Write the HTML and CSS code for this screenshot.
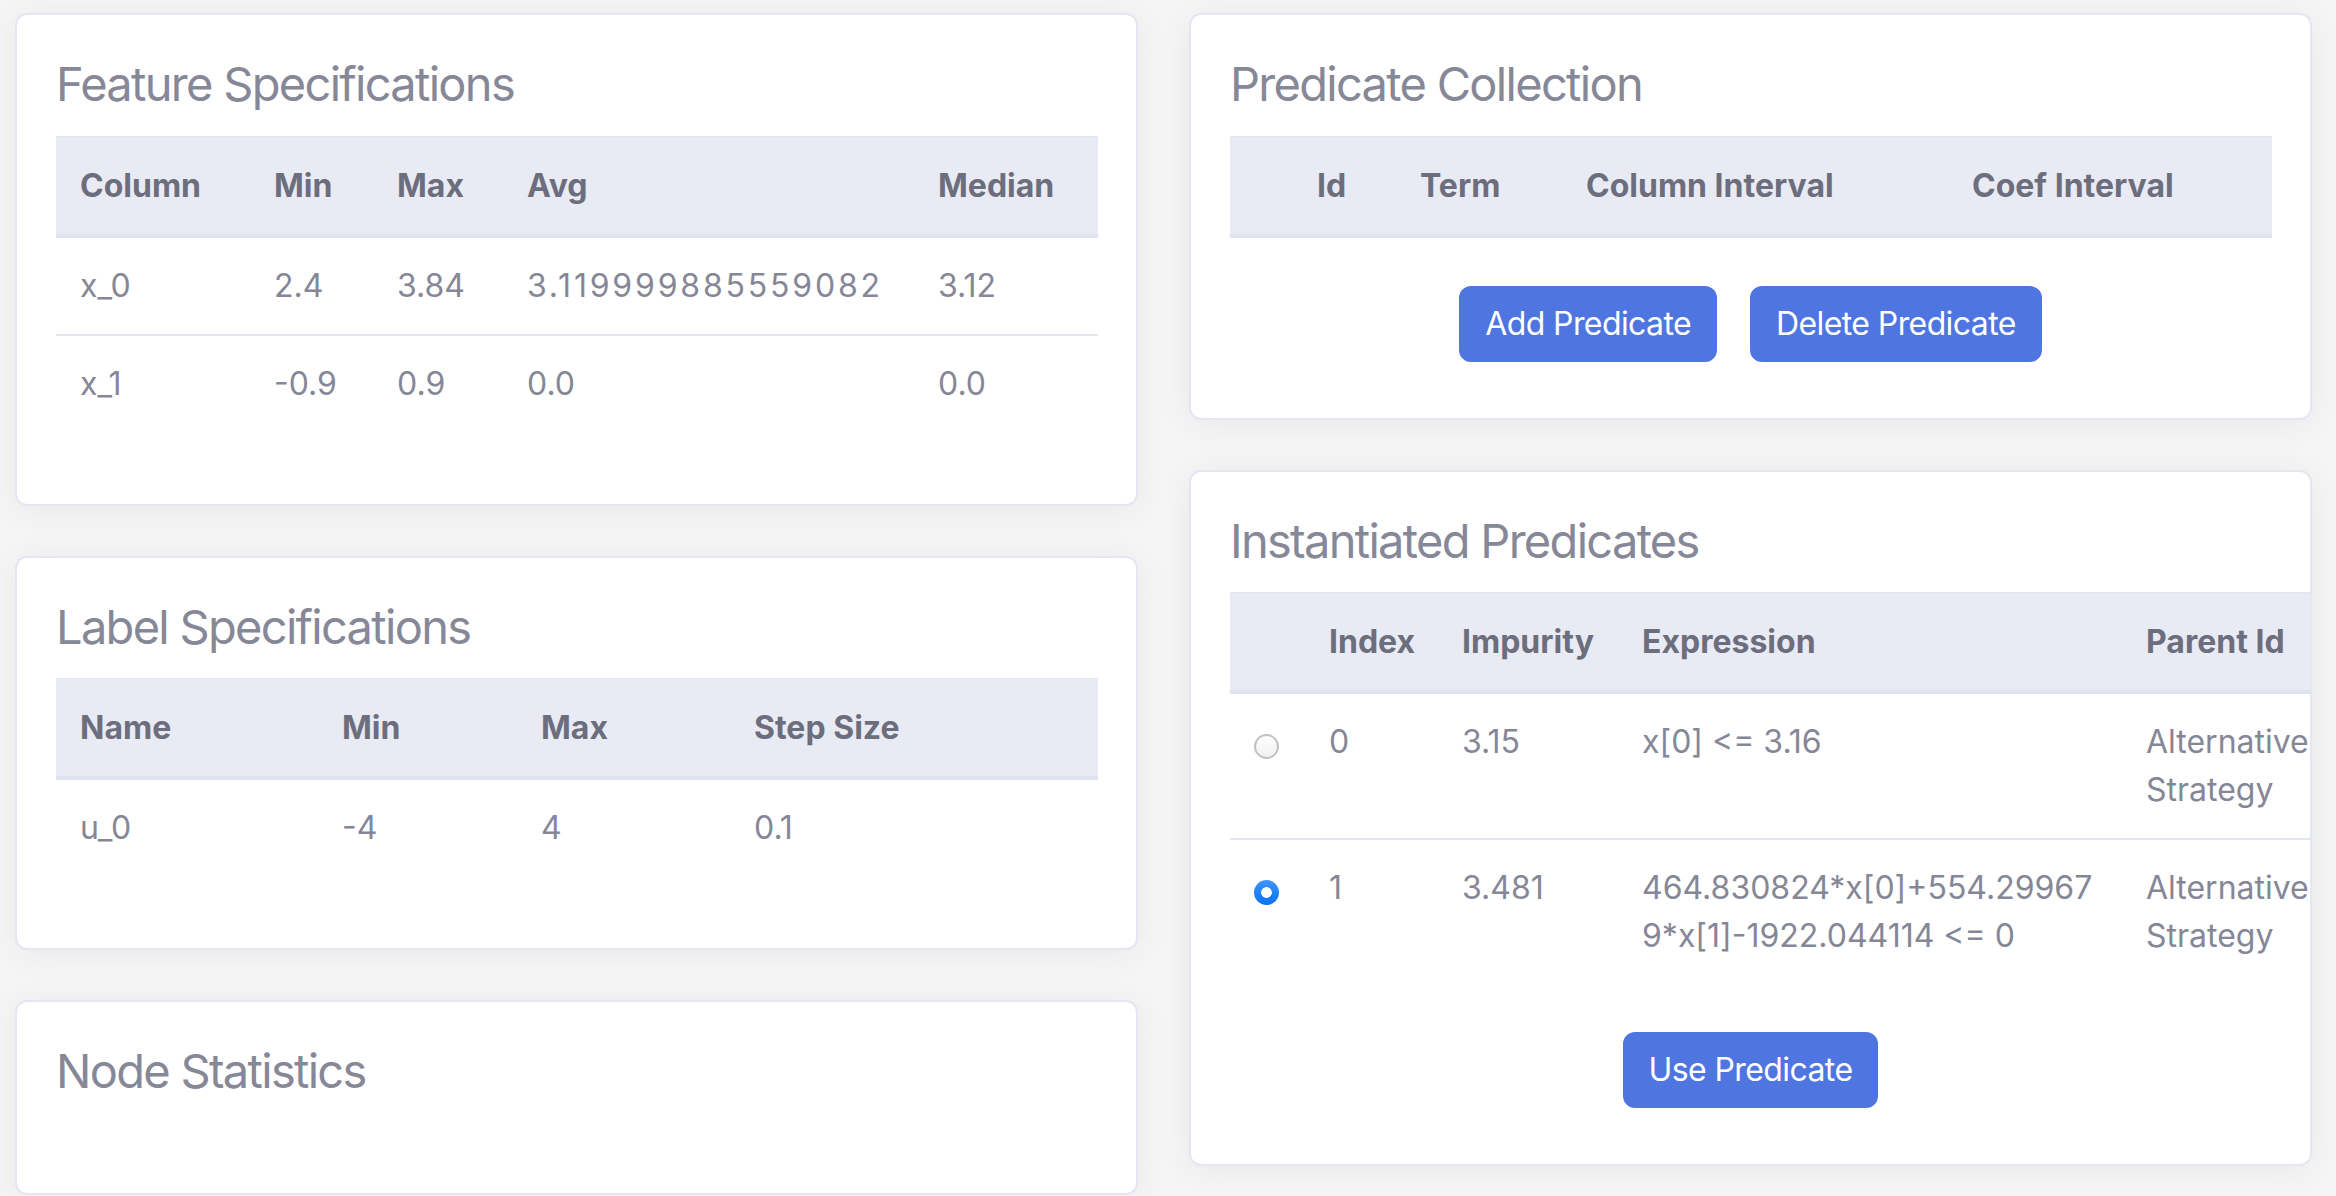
FILE: index.html
```html
<!DOCTYPE html>
<html lang="en">
<head>
<meta charset="utf-8">
<title>Node Inspector</title>
<link rel="stylesheet" href="styles.css">
</head>
<body>
<div class="layout">
  <div class="column">
    <section class="card">
      <h4 class="card-title">Feature Specifications</h4>
      <table class="table">
        <thead>
          <tr>
            <th class="fs-col">Column</th>
            <th class="fs-min">Min</th>
            <th class="fs-max">Max</th>
            <th class="fs-avg">Avg</th>
            <th class="fs-med">Median</th>
          </tr>
        </thead>
        <tbody>
          <tr><td>x_0</td><td>2.4</td><td>3.84</td><td class="num-wide">3.119999885559082</td><td>3.12</td></tr>
          <tr><td>x_1</td><td>-0.9</td><td>0.9</td><td>0.0</td><td>0.0</td></tr>
        </tbody>
      </table>
    </section>

    <section class="card">
      <h4 class="card-title">Label Specifications</h4>
      <table class="table">
        <thead>
          <tr>
            <th class="ls-name">Name</th>
            <th class="ls-min">Min</th>
            <th class="ls-max">Max</th>
            <th class="ls-step">Step Size</th>
          </tr>
        </thead>
        <tbody>
          <tr><td>u_0</td><td>-4</td><td>4</td><td>0.1</td></tr>
        </tbody>
      </table>
    </section>

    <section class="card card-stats">
      <h4 class="card-title">Node Statistics</h4>
      <div class="stats-body"></div>
    </section>
  </div>

  <div class="column">
    <section class="card">
      <h4 class="card-title">Predicate Collection</h4>
      <table class="table">
        <thead>
          <tr>
            <th class="pc-sel"></th>
            <th class="pc-id">Id</th>
            <th class="pc-term">Term</th>
            <th class="pc-col">Column Interval</th>
            <th class="pc-coef">Coef Interval</th>
          </tr>
        </thead>
        <tbody></tbody>
      </table>
      <div class="actions">
        <button class="btn" type="button">Add Predicate</button>
        <button class="btn" type="button">Delete Predicate</button>
      </div>
    </section>

    <section class="card">
      <h4 class="card-title">Instantiated Predicates</h4>
      <table class="table table-wide">
        <thead>
          <tr>
            <th class="ip-sel"></th>
            <th class="ip-index">Index</th>
            <th class="ip-imp">Impurity</th>
            <th class="ip-expr">Expression</th>
            <th class="ip-parent">Parent Id</th>
          </tr>
        </thead>
        <tbody>
          <tr>
            <td><input class="radio" type="radio" name="pred"></td>
            <td>0</td>
            <td>3.15</td>
            <td class="expr">x[0] &lt;= 3.16</td>
            <td>Alternative Strategy</td>
          </tr>
          <tr>
            <td><input class="radio" type="radio" name="pred" checked></td>
            <td>1</td>
            <td>3.481</td>
            <td class="expr">464.830824*x[0]+554.299679*x[1]-1922.044114 &lt;= 0</td>
            <td>Alternative Strategy</td>
          </tr>
        </tbody>
      </table>
      <div class="actions">
        <button class="btn" type="button">Use Predicate</button>
      </div>
    </section>
  </div>
</div>
</body>
</html>
```

FILE: styles.css
```css
* {
  box-sizing: border-box;
}

html, body {
  margin: 0;
  padding: 0;
}

body {
  background: #f5f5f6;
  font-family: Inter, "Noto Sans", "Liberation Sans", sans-serif;
  font-size: 32px;
  line-height: 48px;
  color: #858797;
}

.layout {
  display: grid;
  grid-template-columns: 1123px 1123px;
  column-gap: 51px;
  padding: 13px 24px 0 15px;
  align-items: start;
}

.column {
  display: flex;
  flex-direction: column;
  gap: 50px;
}

.card {
  background: #ffffff;
  border: 2px solid #e4e6f1;
  border-radius: 12px;
  padding: 40px 39px;
  overflow: hidden;
  box-shadow: 0 4px 36px rgba(0, 0, 0, 0.055);
}

.card-title {
  margin: 0 0 23px 0;
  font-size: 47px;
  line-height: 57.6px;
  font-weight: 400;
  color: #878897;
  letter-spacing: -1.7px;
}

.stats-body {
  height: 30px;
}

.table {
  width: 100%;
  border-collapse: collapse;
  table-layout: fixed;
  margin-bottom: 32px;
}

.table th {
  text-align: left;
  font-weight: 700;
  color: #6c6e7d;
  background: #e8ebf3;
  padding: 25px 24px 24px 24px;
  border-top: 1px solid #e2e5ef;
  border-bottom: 4px solid #dfe3ee;
  vertical-align: bottom;
  white-space: nowrap;
}

.table td {
  padding: 24px;
  border-top: 2px solid #e3e6f0;
  vertical-align: top;
}

.table tbody tr:first-child td {
  border-top: 4px solid #dfe3ee;
}

.num-wide {
  letter-spacing: 2.8px;
}

/* Feature Specifications */
.fs-col { width: 194px; }
.fs-min { width: 123px; }
.fs-max { width: 130px; }
.fs-avg { width: 411px; }
.fs-med { width: 184px; }

/* Label Specifications */
.ls-name { width: 262px; }
.ls-min { width: 199px; }
.ls-max { width: 213px; }
.ls-step { width: 368px; }

/* Predicate Collection */
.pc-sel { width: 63px; }
.pc-id { width: 103px; }
.pc-term { width: 166px; }
.pc-col { width: 386px; }
.pc-coef { width: 324px; }

/* Instantiated Predicates */
.table-wide {
  width: 1112px;
}
.ip-sel { width: 75px; }
.ip-index { width: 133px; }
.ip-imp { width: 180px; }
.ip-expr { width: 504px; }
.ip-parent { width: 220px; }

.expr {
  word-break: break-all;
}

.radio {
  appearance: none;
  -webkit-appearance: none;
  display: block;
  width: 25px;
  height: 25px;
  margin: 16px 0 0 0;
  border-radius: 50%;
  border: 2px solid #c2c2c4;
  background: linear-gradient(#ffffff, #f0f0f0);
}

.radio:checked {
  border: none;
  background: radial-gradient(circle, #ffffff 0 5px, transparent 5.6px),
              linear-gradient(#3d95ff, #0a72f0);
}

.actions {
  display: flex;
  justify-content: center;
  gap: 33px;
  padding: 16px 0;
}

.btn {
  font-family: inherit;
  font-size: 32px;
  line-height: 48px;
  color: #ffffff;
  background: #4f75e0;
  border: 2px solid #4f75e0;
  border-radius: 12px;
  padding: 12px 24px;
  cursor: pointer;
  letter-spacing: -0.6px;
}
```
